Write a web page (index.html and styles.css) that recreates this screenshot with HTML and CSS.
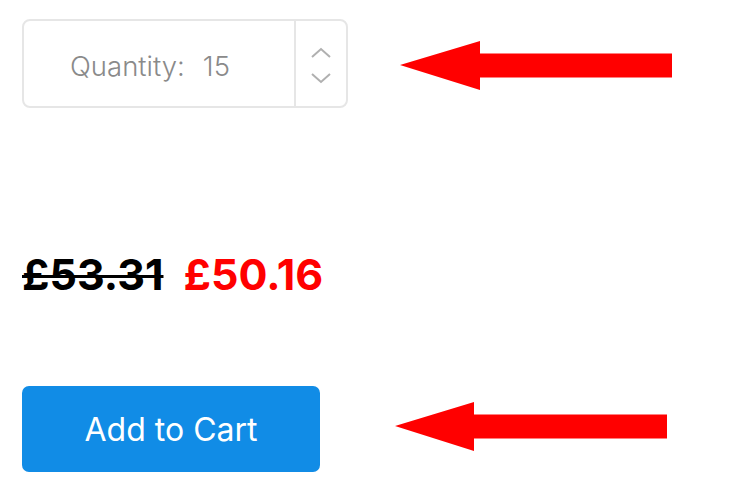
FILE: index.html
```html
<!DOCTYPE html>
<html lang="en">
<head>
    <meta charset="UTF-8">
    <title>Product</title>
    <link rel="stylesheet" href="styles.css">
</head>
<body>
    <div class="page">
        <div class="row qty-row">
            <div class="qty">
                <div class="qty-value">
                    <span class="qty-label">Quantity:</span>
                    <span class="qty-num">15</span>
                </div>
                <div class="qty-spin">
                    <svg width="20" height="40" viewBox="0 0 20 40">
                        <polyline points="1,12 10,4 19,12" fill="none" stroke="#b0b0b0" stroke-width="2"/>
                        <polyline points="1,29 10,37 19,29" fill="none" stroke="#b0b0b0" stroke-width="2"/>
                    </svg>
                </div>
            </div>
            <svg class="arrow arrow-qty" width="272" height="50" viewBox="0 0 272 50">
                <polygon points="0,24 80,0 80,12.5 272,12.5 272,36.5 80,36.5 80,49" fill="#ff0000"/>
            </svg>
        </div>

        <div class="prices">
            <span class="price-old">£53.31</span>
            <span class="price-new">£50.16</span>
        </div>

        <div class="row cart-row">
            <button class="cart-btn">Add to Cart</button>
            <svg class="arrow arrow-cart" width="272" height="50" viewBox="0 0 272 50">
                <polygon points="0,24 79,0 79,12.5 272,12.5 272,36.5 79,36.5 79,49" fill="#ff0000"/>
            </svg>
        </div>
    </div>
</body>
</html>
```

FILE: styles.css
```css
* {
    box-sizing: border-box;
}

body {
    margin: 0;
    background: #ffffff;
    font-family: Inter, 'Noto Sans', sans-serif;
}

.page {
    padding: 19px 22px;
}

.row {
    display: flex;
    align-items: center;
}

.qty {
    display: flex;
    width: 326px;
    height: 89px;
    border: 2px solid #e6e6e6;
    border-radius: 8px;
}

.qty-value {
    flex: 1;
    display: flex;
    align-items: center;
    padding-left: 46px;
    padding-top: 5px;
    gap: 18px;
    color: #8a8a8a;
    font-size: 27.5px;
    font-weight: 300;
    border-right: 2px solid #e6e6e6;
}

.qty-spin {
    width: 50px;
    display: flex;
    align-items: center;
    justify-content: center;
    padding-top: 3px;
}

.arrow-qty {
    margin-left: 52px;
    margin-top: 5px;
}

.prices {
    margin-top: 140px;
    display: flex;
    gap: 20px;
    font-size: 43px;
    font-weight: 700;
    line-height: 52px;
}

.price-old {
    color: #000000;
    text-decoration: line-through;
    text-decoration-thickness: 3px;
}

.price-new {
    color: #ff0000;
}

.cart-row {
    margin-top: 86px;
}

.cart-btn {
    width: 298px;
    height: 86px;
    background-color: #118ce6;
    color: #ffffff;
    border: none;
    border-radius: 7px;
    font-family: inherit;
    font-size: 32px;
    font-weight: 400;
    padding-top: 2px;
}

.arrow-cart {
    margin-left: 75px;
    margin-top: -4px;
}
```
